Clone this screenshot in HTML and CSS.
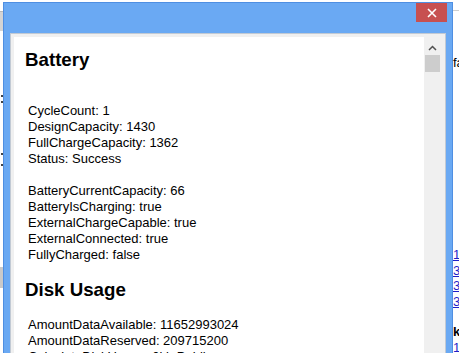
FILE: index.html
```html
<!DOCTYPE html>
<html lang="en">
<head>
    <meta charset="UTF-8">
    <title>Device Info</title>
    <link rel="stylesheet" href="styles.css">
</head>
<body>
    <div class="desk">
        <div class="edge-left">
            <div class="strip-top"></div>
            <span class="dot d1"></span>
            <span class="dot d2"></span>
            <span class="dot d3"></span>
            <span class="dot d4"></span>
            <div class="strip-low"></div>
        </div>

        <div class="window">
            <div class="titlebar">
                <button class="close" title="Close">
                    <svg width="10" height="10" viewBox="0 0 10 10"><path d="M1 1 L9 9 M9 1 L1 9" stroke="#fff" stroke-width="1.6" fill="none"/></svg>
                </button>
            </div>
            <div class="frame">
                <div class="content">
                    <h3>Battery</h3>
                    <div class="group spaced">
                        <p>CycleCount: 1</p>
                        <p>DesignCapacity: 1430</p>
                        <p>FullChargeCapacity: 1362</p>
                        <p>Status: Success</p>
                    </div>
                    <div class="group">
                        <p>BatteryCurrentCapacity: 66</p>
                        <p>BatteryIsCharging: true</p>
                        <p>ExternalChargeCapable: true</p>
                        <p>ExternalConnected: true</p>
                        <p>FullyCharged: false</p>
                    </div>
                    <h3>Disk Usage</h3>
                    <div class="group">
                        <p>AmountDataAvailable: 11652993024</p>
                        <p>AmountDataReserved: 209715200</p>
                        <p>CalculateDiskUsage: 0kb Public</p>
                    </div>
                </div>
                <div class="scrollbar">
                    <div class="arrow">
                        <svg width="9" height="6" viewBox="0 0 9 6"><path d="M1 5 L4.5 1.5 L8 5" stroke="#505050" stroke-width="1.5" fill="none"/></svg>
                    </div>
                    <div class="thumb"></div>
                </div>
            </div>
        </div>

        <div class="edge-right">
            <div class="rule"></div>
            <div class="fa">fa</div>
            <div class="links">
                <a href="#">1</a>
                <a href="#">3</a>
                <a href="#">3</a>
                <a href="#">3</a>
            </div>
            <div class="k">k</div>
            <a class="last" href="#">1</a>
        </div>
    </div>
</body>
</html>
```

FILE: styles.css
```css
html, body { margin: 0; height: 353px; overflow: hidden; background: #fff; font-family: "Liberation Sans", Arial, sans-serif; color: #000; }
.desk { display: flex; height: 353px; }

.edge-left { width: 3px; flex: none; position: relative; }
.strip-top { height: 19px; margin-top: 11px; border-top: 1px solid #b8b8b8; background: #d4d4d4; }
.strip-low { height: 21px; margin-top: 236px; background: #c9c9c9; }
.dot { position: absolute; left: 1px; width: 2px; height: 2px; background: #444; }
.d1 { top: 95px; }
.d2 { top: 101px; }
.d3 { top: 153px; }
.d4 { top: 164px; }

.window { width: 450px; height: 400px; flex: none; margin-top: 2px; box-sizing: border-box; background: #6aa9f3; border: 1px solid #4f8fe2; border-bottom: none; padding: 0 6px; }
.titlebar { height: 30px; display: flex; justify-content: flex-end; align-items: flex-start; }
.close { width: 31px; height: 19px; margin-right: -1px; padding: 0; border: none; background: #c75050; display: flex; align-items: center; justify-content: center; }

.frame { display: flex; height: 340px; border: 1px solid #c2cad4; background: #f0f0f0; padding: 3px 5px 0 3px; }
.content { flex: 1; background: #fff; padding: 12px 0 0 11px; }
h3 { margin: 0 0 16px; font-size: 18.72px; line-height: 22px; font-weight: bold; }
.group { margin: 0 0 16px 3px; font-size: 13px; line-height: 16px; }
.group.spaced { margin-top: 32px; }
.group p { margin: 0; }

.scrollbar { width: 16px; flex: none; background: #f0f0f0; }
.arrow { height: 18px; display: flex; align-items: center; justify-content: center; padding-top: 3px; box-sizing: border-box; }
.thumb { width: 15px; height: 17px; margin-left: 1px; background: #cdcdcd; }

.edge-right { flex: 1; font-size: 13px; line-height: 16px; white-space: nowrap; }
.rule { height: 10px; border-bottom: 1px solid #cfcfcf; }
.fa { margin-top: 44px; }
.links { margin-top: 176px; line-height: 15.5px; }
.links a { display: block; }
a { color: #1f1fc8; }
.k { margin-top: 15px; font-weight: bold; }
.last { display: block; }
```
